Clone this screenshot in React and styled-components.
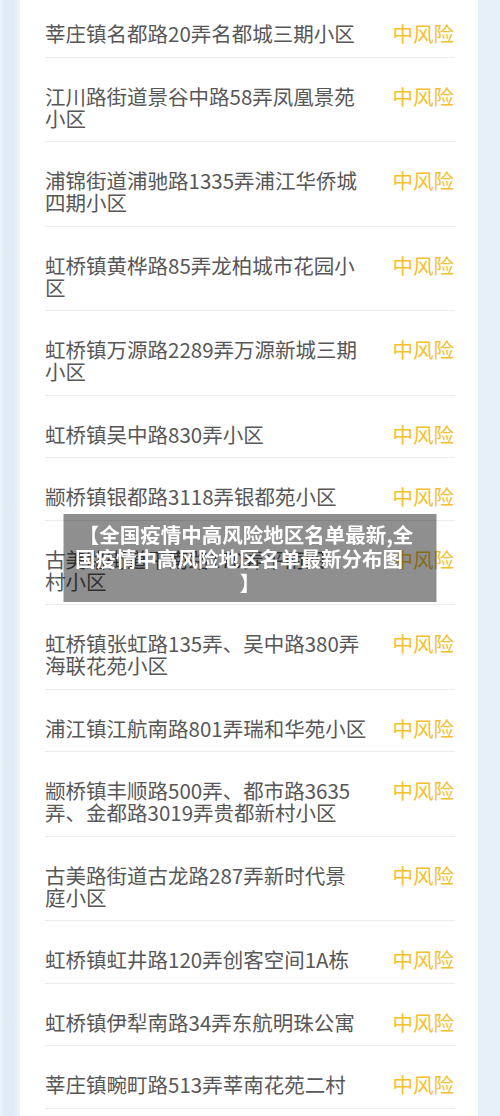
import React from "react";
import styled, { createGlobalStyle } from "styled-components";

const GlobalStyle = createGlobalStyle`
  html, body {
    margin: 0;
    padding: 0;
    overflow: hidden;
  }
  body {
    font-family: "Noto Sans CJK SC", "Noto Sans", sans-serif;
    background: #e7f0f9;
  }
`;

const areas = [
  ["莘庄镇名都路20弄名都城三期小区"],
  ["江川路街道景谷中路58弄凤凰景苑", "小区"],
  ["浦锦街道浦驰路1335弄浦江华侨城", "四期小区"],
  ["虹桥镇黄桦路85弄龙柏城市花园小", "区"],
  ["虹桥镇万源路2289弄万源新城三期", "小区"],
  ["虹桥镇吴中路830弄小区"],
  ["颛桥镇银都路3118弄银都苑小区"],
  ["古美路街道平南路170弄平南四", "村小区"],
  ["虹桥镇张虹路135弄、吴中路380弄", "海联花苑小区"],
  ["浦江镇江航南路801弄瑞和华苑小区"],
  ["颛桥镇丰顺路500弄、都市路3635", "弄、金都路3019弄贵都新村小区"],
  ["古美路街道古龙路287弄新时代景", "庭小区"],
  ["虹桥镇虹井路120弄创客空间1A栋"],
  ["虹桥镇伊犁南路34弄东航明珠公寓"],
  ["莘庄镇畹町路513弄莘南花苑二村"],
];

// caption lines, with how far each is pulled left of centre
const titleLines = [
  ["【全国疫情中高风险地区名单最新,全", 8],
  ["国疫情中高风险地区名单最新分布图", 22],
  ["】", 0],
];

const App = () => {
  return (
    <>
      <GlobalStyle />
      <Page>
        <Card>
          {areas.map((lines, i) => (
            <Row key={i} $first={i === 0}>
              <Address>
                {lines.map((line, j) => (
                  <Line key={j}>{line}</Line>
                ))}
              </Address>
              <Risk>中风险</Risk>
            </Row>
          ))}
        </Card>
      </Page>
      <Caption>
        {titleLines.map(([line, shift], i) => (
          <CaptionLine key={i} $shift={shift}>
            {line}
          </CaptionLine>
        ))}
      </Caption>
    </>
  );
};

const Page = styled.div`
  height: 1116px;
  overflow: hidden;
  padding: 0 22px 0 20px;
  background: linear-gradient(
      to right,
      #eef4fa 0,
      #e1ebf5 4px,
      #e1ebf5 14px,
      #ecf3f9 18px,
      #ecf3f9 20px,
      transparent 20px
    ),
    #e7f0f9;
`;

const Card = styled.div`
  background: #ffffff;
  min-height: 100%;
  padding: 0 23px 0 25px;
`;

const Row = styled.div`
  display: flex;
  justify-content: space-between;
  align-items: flex-start;
  padding: ${(p) => (p.$first ? "22px" : "27px")} 0 12.5px;
  border-bottom: 1px solid #ececec;
`;

const Address = styled.div`
  display: flex;
  flex-direction: column;
  color: #575757;
  font-size: 20.5px;
  line-height: 22px;
`;

const Line = styled.span`
  white-space: nowrap;
`;

const Risk = styled.span`
  color: #f5c02e;
  font-size: 20.5px;
  line-height: 22px;
  margin-right: 1px;
  white-space: nowrap;
`;

const Caption = styled.div`
  position: fixed;
  top: 50%;
  left: 50%;
  transform: translate(-50%, -50%);
  width: 373px;
  box-sizing: border-box;
  padding: 8px 10px;
  background: rgba(0, 0, 0, 0.44);
  color: #ffffff;
  font-weight: 700;
  font-size: 20.5px;
  line-height: 24px;
  text-align: center;
`;

const CaptionLine = styled.div`
  white-space: nowrap;
  padding-right: ${(p) => p.$shift}px;
`;

export default App;
